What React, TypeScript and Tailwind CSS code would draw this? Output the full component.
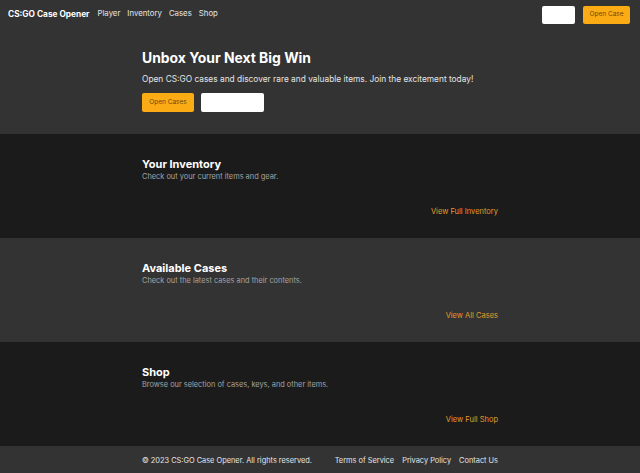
import React from "react";

const sections = [
  {
    title: "Your Inventory",
    text: "Check out your current items and gear.",
    link: "View Full Inventory",
    dark: true,
  },
  {
    title: "Available Cases",
    text: "Check out the latest cases and their contents.",
    link: "View All Cases",
    dark: false,
  },
  {
    title: "Shop",
    text: "Browse our selection of cases, keys, and other items.",
    link: "View Full Shop",
    dark: true,
  },
];

export default function App() {
  return (
    <div
      className="w-[640px] h-[473px] overflow-hidden bg-[#1b1b1b] text-white"
      style={{ fontFamily: "Inter, 'Noto Sans', sans-serif" }}
    >
      {/* Header */}
      <header className="h-[28px] bg-[#333333] flex items-center justify-between pl-[8px] pr-[10px]">
        <nav className="flex items-center gap-[7px] text-[7.8px]">
          <span className="font-bold text-[8.3px] mr-[1px]">CS:GO Case Opener</span>
          <span className="text-neutral-200">Player</span>
          <span className="text-neutral-200">Inventory</span>
          <span className="text-neutral-200">Cases</span>
          <span className="text-neutral-200">Shop</span>
        </nav>
        <div className="flex items-center gap-[8px] mt-[1px]">
          <button className="w-[33px] h-[18px] bg-white rounded-[2px]" />
          <button className="w-[47px] h-[18px] bg-[#fbab14] rounded-[2px] text-[6.5px] text-[#6b4a10]">
            Open Case
          </button>
        </div>
      </header>

      {/* Hero */}
      <section className="h-[106px] bg-[#333333]">
        <div className="w-[356px] mx-auto pt-[21px]">
          <h1 className="text-[13.9px] font-bold leading-[18px]">Unbox Your Next Big Win</h1>
          <p className="text-[8.36px] text-neutral-200 mt-[6px] leading-[12px]">
            Open CS:GO cases and discover rare and valuable items. Join the excitement today!
          </p>
          <div className="flex gap-[7px] mt-[8px]">
            <button className="w-[52px] h-[19px] bg-[#fbab14] rounded-[2px] text-[6.5px] text-[#6b4a10]">
              Open Cases
            </button>
            <button className="w-[63px] h-[19px] bg-white rounded-[2px]" />
          </div>
        </div>
      </section>

      {sections.map((s) => (
        <section
          key={s.title}
          className={`h-[104px] ${s.dark ? "bg-[#1b1b1b]" : "bg-[#333333]"}`}
        >
          <div className="w-[356px] mx-auto pt-[23px]">
            <h2 className="text-[11px] font-bold leading-[14px]">{s.title}</h2>
            <p className="text-[7.4px] text-[#a3a3a3] leading-[10px] mt-[1px]">{s.text}</p>
            <div className="flex justify-end mt-[24px]">
              <a className="text-[7.5px] text-[#e59a2a]">{s.link}</a>
            </div>
          </div>
        </section>
      ))}

      {/* Footer */}
      <footer className="h-[27px] bg-[#333333]">
        <div className="w-[356px] mx-auto h-full flex items-center justify-between pt-[3px] text-[7.4px] text-neutral-200">
          <span>© 2023 CS:GO Case Opener. All rights reserved.</span>
          <div className="flex gap-[8px]">
            <span>Terms of Service</span>
            <span>Privacy Policy</span>
            <span>Contact Us</span>
          </div>
        </div>
      </footer>
    </div>
  );
}
